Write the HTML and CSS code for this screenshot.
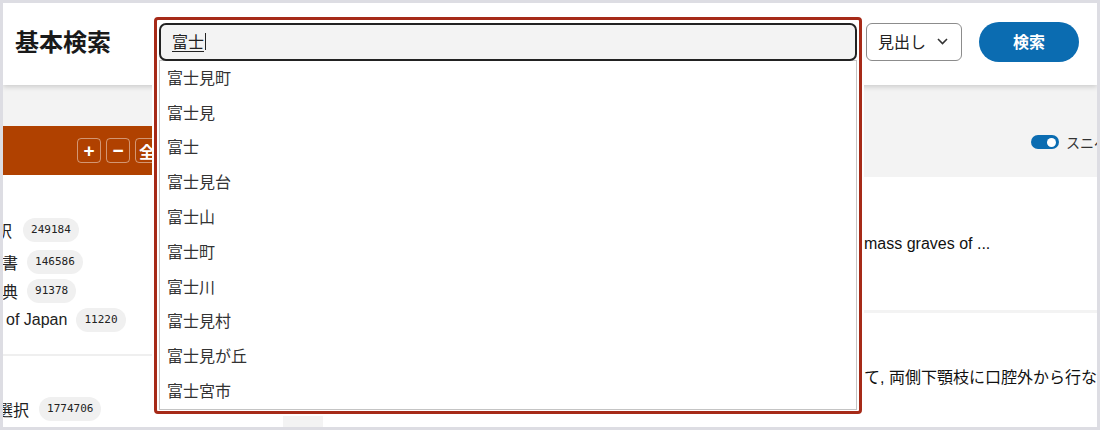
FILE: index.html
```html
<!DOCTYPE html>
<html lang="ja">
<head>
<meta charset="utf-8">
<title>基本検索</title>
<link rel="stylesheet" href="styles.css">
</head>
<body>
<div class="app">
  <header class="header">
    <h1 class="title">基本検索</h1>
    <div class="search">
      <div class="search-box">
        <div class="query"><span class="composing">富士</span><span class="caret"></span></div>
        <ul class="suggest">
          <li>富士見町</li>
          <li>富士見</li>
          <li>富士</li>
          <li>富士見台</li>
          <li>富士山</li>
          <li>富士町</li>
          <li>富士川</li>
          <li>富士見村</li>
          <li>富士見が丘</li>
          <li>富士宮市</li>
        </ul>
      </div>
    </div>
    <div class="select">
      <span>見出し</span>
      <svg class="chev" width="11" height="7" viewBox="0 0 11 7"><path d="M1 1l4.5 4.5L10 1" fill="none" stroke="#333" stroke-width="1.6"/></svg>
    </div>
    <button class="go">検索</button>
  </header>

  <div class="content">
    <aside class="sidebar">
      <div class="facet-head">
        <span class="tool sym">+</span>
        <span class="tool sym">−</span>
        <span class="tool">全</span>
      </div>
      <div class="facets">
        <div class="row first"><span class="lbl cut-a">訳</span><span class="badge">249184</span></div>
        <div class="row"><span class="lbl cut-b">書</span><span class="badge">146586</span></div>
        <div class="row"><span class="lbl cut-b">典</span><span class="badge">91378</span></div>
        <div class="row"><span class="lbl cut-c">of Japan</span><span class="badge">11220</span></div>
        <div class="divider"></div>
        <div class="row"><span class="lbl cut-d">選択</span><span class="badge wide">1774706</span></div>
      </div>
    </aside>

    <main class="main">
      <div class="toolbar">
        <span class="toggle"><span class="knob"></span></span>
        <span class="toggle-label">スニペット表示</span>
      </div>
      <section class="card">
        <p class="snippet">mass graves of ...</p>
      </section>
      <section class="card last">
        <p class="snippet">て, 両側下顎枝に口腔外から行なう手術</p>
      </section>
    </main>
  </div>
</div>
</body>
</html>
```

FILE: styles.css
```css
* { box-sizing: border-box; }

html, body {
  margin: 0;
  padding: 0;
  background: #dddde3;
}

body {
  font-family: "Liberation Sans", "Noto Sans CJK JP", sans-serif;
  color: #222;
}

.app {
  margin: 3px;
  width: 1094px;
  height: 424px;
  background: #f3f3f3;
  overflow: hidden;
  display: flex;
  flex-direction: column;
}

/* ---------- header ---------- */
.header {
  flex: none;
  height: 82px;
  background: #fff;
  display: flex;
  align-items: center;
  padding: 0 0 4px 12px;
  box-shadow: 0 2px 5px rgba(0, 0, 0, 0.16);
  position: relative;
  z-index: 2;
}

.title {
  flex: none;
  width: 139px;
  margin: 0;
  font-family: "Noto Sans CJK JP", sans-serif;
  font-size: 24px;
  font-weight: 700;
  color: #1a1a1a;
  line-height: 1;
  padding-bottom: 2px;
}

.search {
  flex: none;
  width: 708px;
  align-self: flex-start;
  margin-top: 14px;
}

.search-box {
  width: 708px;
  border: 3px solid #a62a18;
  border-radius: 4px;
  padding: 3px 2px 1px;
  background: #fff;
  box-shadow: 0 0 0 2px #fff;
}

.query {
  height: 38px;
  border: 2px solid #222;
  border-radius: 7px;
  background: #f3f3f3;
  padding: 0 0 3px 11px;
  display: flex;
  align-items: center;
  font-family: "Noto Sans CJK JP", sans-serif;
  font-size: 16px;
  color: #222;
  position: relative;
  z-index: 1;
}

.composing {
  text-decoration: underline;
  text-underline-offset: 3px;
}

.caret {
  display: inline-block;
  width: 1px;
  height: 17px;
  background: #222;
  margin-left: 1px;
  margin-top: 2px;
}

.suggest {
  list-style: none;
  margin: -1px 0 0;
  padding: 0;
  border: 1px solid #c4c4c4;
  background: #fff;
}

.suggest li {
  height: 34.8px;
  display: flex;
  align-items: center;
  padding: 0 0 3px 7px;
  font-family: "Noto Sans CJK JP", sans-serif;
  font-size: 16px;
  color: #333;
}

.select {
  flex: none;
  margin-left: 4px;
  width: 96px;
  height: 38px;
  border: 1px solid #8c8c8c;
  border-radius: 6px;
  display: flex;
  align-items: center;
  padding: 0 0 2px 11px;
  font-family: "Noto Sans CJK JP", sans-serif;
  font-size: 16px;
  color: #222;
}

.chev {
  margin-left: 11px;
  margin-top: 1px;
}

.go {
  flex: none;
  margin-left: 17px;
  width: 100px;
  height: 40px;
  border: 0;
  border-radius: 20px;
  background: #0b6cb1;
  color: #fff;
  font-family: "Noto Sans CJK JP", sans-serif;
  font-size: 16px;
  font-weight: 700;
  padding: 0 0 3px;
}

/* ---------- content ---------- */
.content {
  flex: 1;
  display: flex;
  gap: 40px;
  min-height: 0;
}

.sidebar {
  flex: none;
  width: 280px;
  margin-top: 41px;
  background: #fff;
  overflow: hidden;
}

.facet-head {
  height: 49px;
  background: #b04100;
  display: flex;
  align-items: center;
  gap: 5px;
  padding-left: 74px;
}

.tool {
  width: 24px;
  height: 25px;
  border: 1px solid rgba(255, 255, 255, 0.45);
  border-radius: 4px;
  color: #fff;
  font-family: "Noto Sans CJK JP", sans-serif;
  font-size: 16px;
  font-weight: 700;
  display: flex;
  align-items: center;
  justify-content: center;
  line-height: 1;
}

.tool.sym {
  font-family: "Liberation Sans", sans-serif;
  font-size: 19px;
  padding-bottom: 1px;
}

.facets {
  padding-top: 40px;
}

.row {
  height: 29px;
  display: flex;
  align-items: center;
  gap: 9px;
  white-space: nowrap;
  font-size: 16px;
  color: #222;
}

.row.first {
  margin-bottom: 3px;
}

.lbl {
  flex: none;
}

.cut-a { margin-left: -7px; margin-right: 2px; }
.cut-b { margin-left: -1px; }
.cut-c { margin-left: 3px; }
.cut-d { margin-left: -6px; margin-right: 1px; }

.badge {
  flex: none;
  height: 24px;
  border-radius: 12px;
  background: #f0f0f0;
  padding: 0 8px;
  display: inline-flex;
  align-items: center;
  font-family: "DejaVu Sans Mono", "Liberation Mono", monospace;
  font-size: 11px;
  color: #222;
}

.divider {
  height: 2px;
  background: #efefef;
  margin: 20px 0 38px;
}

.main {
  flex: 1;
  min-width: 0;
  display: flex;
  flex-direction: column;
}

.toolbar {
  flex: none;
  height: 92px;
  display: flex;
  align-items: flex-start;
  padding: 50px 0 0 708px;
  white-space: nowrap;
  overflow: hidden;
}

.toggle {
  flex: none;
  width: 28px;
  height: 14px;
  border-radius: 7px;
  background: #0b6cb1;
  display: flex;
  align-items: center;
  justify-content: flex-end;
  padding-right: 3px;
}

.knob {
  width: 9px;
  height: 9px;
  border-radius: 50%;
  background: #fff;
}

.toggle-label {
  margin-left: 7px;
  font-family: "Noto Sans CJK JP", sans-serif;
  font-size: 14px;
  line-height: 14px;
  color: #333;
}

.card {
  flex: none;
  height: 133px;
  background: #fff;
  padding: 57px 0 0 541px;
  overflow: hidden;
}

.card.last {
  flex: 1;
  height: auto;
  margin-top: 3px;
  padding-top: 55px;
}

.snippet {
  margin: 0;
  font-size: 16px;
  line-height: 20px;
  color: #111;
  white-space: nowrap;
}
```
